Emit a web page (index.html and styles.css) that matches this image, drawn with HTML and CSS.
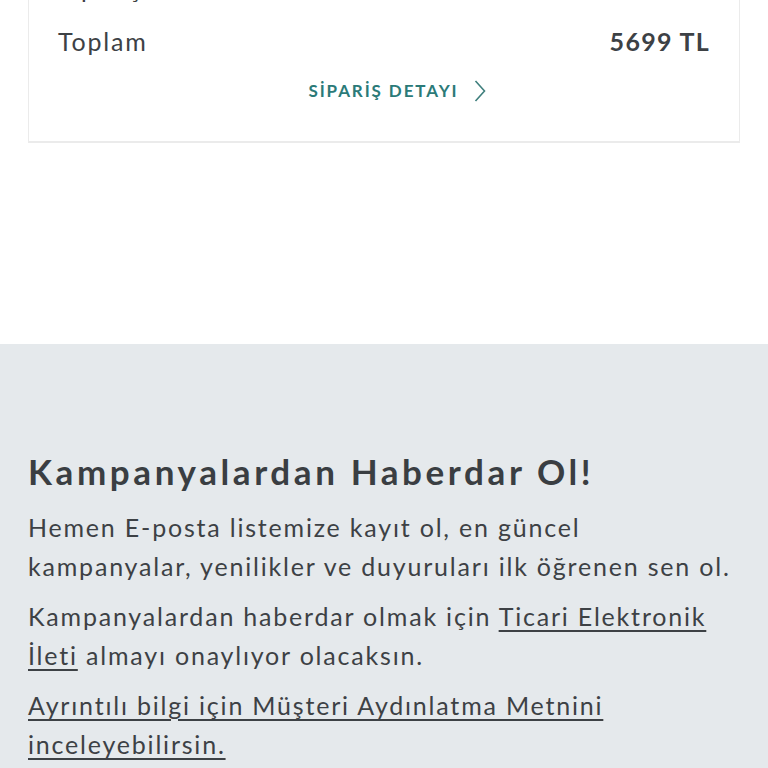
FILE: index.html
```html
<!DOCTYPE html>
<html lang="tr">
  <head>
    <meta charset="UTF-8" />
    <meta name="viewport" content="width=device-width, initial-scale=1.0" />
    <title>Siparişlerim</title>
    <link rel="stylesheet" href="styles.css">
  </head>
  <body>
    <div class="orders">
      <div class="card">
        <div class="row">
          <span class="label">Sipariş Tarihi</span>
          <span class="value">14.11.2023</span>
        </div>
        <div class="row">
          <span class="label">Toplam</span>
          <span class="value total">5699 TL</span>
        </div>
        <a class="detailLink" href="#">
          SİPARİŞ DETAYI
          <svg width="12" height="22" viewBox="0 0 12 22" fill="none" stroke="currentColor" stroke-width="1.6">
            <path d="M1.5 1 L10.5 11 L1.5 21" />
          </svg>
        </a>
      </div>
    </div>

    <div class="newsletter">
      <h2>Kampanyalardan Haberdar Ol!</h2>
      <p>Hemen E-posta listemize kayıt ol, en güncel kampanyalar, yenilikler ve duyuruları ilk öğrenen sen ol.</p>
      <p>Kampanyalardan haberdar olmak için <a href="#">Ticari Elektronik İleti</a> almayı onaylıyor olacaksın.</p>
      <p><a href="#">Ayrıntılı bilgi için Müşteri Aydınlatma Metnini inceleyebilirsin.</a></p>
    </div>
  </body>
</html>
```

FILE: styles.css
```css
body {
  margin: 0;
  padding: 0;
  background-color: #ffffff;
  font-family: Lato, "Noto Sans", sans-serif;
  color: #3d4145;
}

.orders {
  margin-top: -39px;
  padding: 0 28px;
  height: 383px;
}

.card {
  border: 1px solid #ebebeb;
  border-bottom-width: 2px;
  padding: 0 29px 35px;
}

.row {
  display: flex;
  justify-content: space-between;
  align-items: baseline;
  font-size: 25px;
  line-height: 53px;
  letter-spacing: 1.8px;
}

.total {
  font-weight: bold;
  letter-spacing: 1.3px;
}

.detailLink {
  display: flex;
  justify-content: center;
  align-items: center;
  gap: 15px;
  margin-top: 8px;
  padding-left: 26px;
  color: #2b7a78;
  font-size: 17px;
  font-weight: bold;
  letter-spacing: 1.9px;
  text-decoration: none;
  line-height: 30px;
}

.detailLink svg {
  color: #3f7f7d;
}

.newsletter {
  background-color: #e5e9ec;
  padding: 105px 28px 20px;
}

.newsletter h2 {
  margin: 0 0 15px;
  font-size: 35px;
  font-weight: bold;
  letter-spacing: 3.6px;
  line-height: 44px;
  color: #3a3e42;
}

.newsletter p {
  margin: 0 0 11px;
  font-size: 25px;
  line-height: 39px;
  letter-spacing: 1.8px;
}

.newsletter a {
  color: inherit;
  text-decoration: underline;
  text-underline-offset: 4px;
}
```
